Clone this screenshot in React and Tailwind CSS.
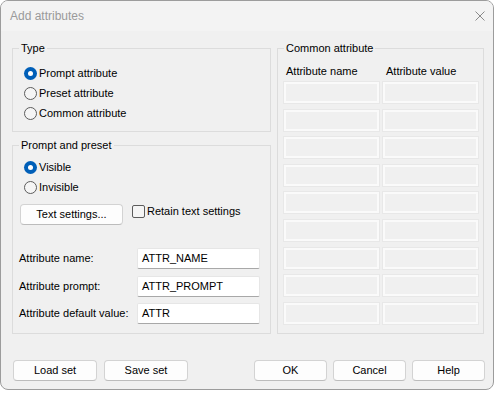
import { useState } from 'react'

const FONT = { fontFamily: '"Liberation Sans", Arial, sans-serif' }

function Radio({ label, checked, onClick }) {
  return (
    <div className="flex items-center h-[20px] gap-[2px] cursor-default" onClick={onClick}>
      {checked ? (
        <span className="w-[13px] h-[13px] rounded-full bg-[#005fb8] flex items-center justify-center">
          <span className="w-[5px] h-[5px] rounded-full bg-white" />
        </span>
      ) : (
        <span className="w-[13px] h-[13px] rounded-full border border-[#5c5c5c] bg-[#f5f5f5]" />
      )}
      <span>{label}</span>
    </div>
  )
}

function Button({ children, className = '' }) {
  return (
    <button
      className={`h-[21px] rounded-[4px] border border-[#d3d3d3] border-b-[#bcbcbc] bg-[#fdfdfd] text-black ${className}`}
    >
      {children}
    </button>
  )
}

function Group({ title, className = '', children }) {
  return (
    <fieldset className={`border border-[#dcdcdc] ${className}`}>
      <legend className="ml-[6px] px-[2px] leading-[16px]">{title}</legend>
      {children}
    </fieldset>
  )
}

function Field({ label, value }) {
  return (
    <div className="flex items-center h-[21px]">
      <span className="w-[118px]">{label}</span>
      <div className="w-[123px] h-[21px] bg-white border border-[#e6e6e6] border-b-[#a8a8a8] rounded-[2px] px-[4px] flex items-center">
        {value}
      </div>
    </div>
  )
}

export default function App() {
  const [type, setType] = useState('prompt')
  const [visible, setVisible] = useState(true)
  const [retain, setRetain] = useState(false)
  const rows = [0, 1, 2, 3, 4, 5, 6, 7, 8]

  return (
    <div className="w-[496px] h-[394px] bg-white text-[11px] text-black" style={FONT}>
      <div className="w-[494px] h-[390px] border border-[#9c9c9c] rounded-[8px] overflow-hidden flex flex-col bg-[#f0f0f0]">
        <div className="h-[30px] shrink-0 bg-[#f3f3f3] flex items-center justify-between pl-[9px] pr-[7px]">
          <span className="text-[12px] text-[#9a9a9a]">Add attributes</span>
          <svg width="10" height="10" viewBox="0 0 10 10" className="mr-[1px]">
            <path d="M0.5 0.5 L9.5 9.5 M9.5 0.5 L0.5 9.5" stroke="#8a8a8a" strokeWidth="1" />
          </svg>
        </div>

        <div className="flex-1 flex flex-col pt-[9px] pl-[11px] pr-[8px]">
          <div className="flex gap-[6px]">
            <div className="w-[259px] flex flex-col gap-[5px]">
              <Group title="Type" className="h-[92px]">
                <div className="pt-[7px] pl-[11px]">
                  <Radio label="Prompt attribute" checked={type === 'prompt'} onClick={() => setType('prompt')} />
                  <Radio label="Preset attribute" checked={type === 'preset'} onClick={() => setType('preset')} />
                  <Radio label="Common attribute" checked={type === 'common'} onClick={() => setType('common')} />
                </div>
              </Group>

              <Group title="Prompt and preset" className="h-[197px]">
                <div className="pt-[4px] pl-[11px]">
                  <Radio label="Visible" checked={visible} onClick={() => setVisible(true)} />
                  <Radio label="Invisible" checked={!visible} onClick={() => setVisible(false)} />
                </div>
                <div className="flex items-start mt-[7px] pl-[7px]">
                  <Button className="w-[103px] h-[20px]">Text settings...</Button>
                  <div className="flex items-center h-[14px] ml-[9px] gap-[2px]" onClick={() => setRetain(!retain)}>
                    <span className="w-[13px] h-[13px] rounded-[2px] border border-[#5c5c5c] bg-[#f5f5f5] flex items-center justify-center">
                      {retain && (
                        <svg width="9" height="9" viewBox="0 0 9 9">
                          <path d="M1 4.5 L3.5 7 L8 1.5" stroke="#000" fill="none" />
                        </svg>
                      )}
                    </span>
                    <span>Retain text settings</span>
                  </div>
                </div>
                <div className="flex flex-col gap-[6.5px] mt-[23px] pl-[6px]">
                  <Field label="Attribute name:" value="ATTR_NAME" />
                  <Field label="Attribute prompt:" value="ATTR_PROMPT" />
                  <Field label="Attribute default value:" value="ATTR" />
                </div>
              </Group>
            </div>

            <Group title="Common attribute" className="w-[207px] h-[294px]">
              <div className="pt-[7px] pl-[6px]">
                <div className="grid grid-cols-[95px_95px] gap-x-[4px] leading-[16px]">
                  <span className="pl-[2px]">Attribute name</span>
                  <span className="pl-[3px]">Attribute value</span>
                </div>
                <div className="grid grid-cols-[95px_95px] gap-x-[4px] gap-y-[6.6px] mt-[3px]">
                  {rows.map((r) => [
                    <div key={`n${r}`} className="h-[21px] border-2 border-[#fafafa] shadow-[0_0_0_1px_#e8e8e8]" />,
                    <div key={`v${r}`} className="h-[21px] border-2 border-[#fafafa] shadow-[0_0_0_1px_#e8e8e8]" />,
                  ])}
                </div>
              </div>
            </Group>
          </div>

          <div className="flex justify-between mt-[26px] pl-[1px]">
            <div className="flex gap-[7px]">
              <Button className="w-[84px]">Load set</Button>
              <Button className="w-[84px]">Save set</Button>
            </div>
            <div className="flex gap-[6px]">
              <Button className="w-[73px]">OK</Button>
              <Button className="w-[73px]">Cancel</Button>
              <Button className="w-[73px]">Help</Button>
            </div>
          </div>
        </div>
      </div>
    </div>
  )
}
